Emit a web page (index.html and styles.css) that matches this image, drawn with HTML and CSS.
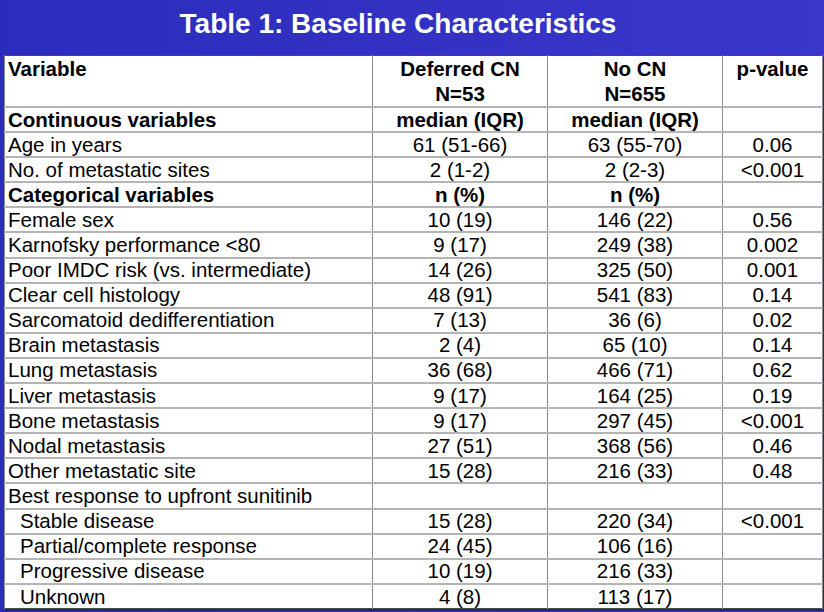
FILE: index.html
```html
<!DOCTYPE html>
<html lang="en">
<head>
    <meta charset="UTF-8">
    <meta name="viewport" content="width=device-width, initial-scale=1.0">
    <title>Table 1: Baseline Characteristics</title>
    <link rel="stylesheet" href="styles.css">
</head>
<body>

    <h1>Table 1: Baseline Characteristics</h1>

    <table class="baseline">
        <colgroup>
            <col class="col-var">
            <col class="col-num">
            <col class="col-num">
            <col class="col-p">
        </colgroup>
        <tr class="head">
            <th class="label">Variable</th>
            <th>Deferred CN<br>N=53</th>
            <th>No CN<br>N=655</th>
            <th>p-value</th>
        </tr>
        <tr class="section">
            <th class="label">Continuous variables</th>
            <th>median (IQR)</th>
            <th>median (IQR)</th>
            <th></th>
        </tr>
        <tr><td class="label">Age in years</td><td>61 (51-66)</td><td>63 (55-70)</td><td>0.06</td></tr>
        <tr><td class="label">No. of metastatic sites</td><td>2 (1-2)</td><td>2 (2-3)</td><td>&lt;0.001</td></tr>
        <tr class="section">
            <th class="label">Categorical variables</th>
            <th>n (%)</th>
            <th>n (%)</th>
            <th></th>
        </tr>
        <tr><td class="label">Female sex</td><td>10 (19)</td><td>146 (22)</td><td>0.56</td></tr>
        <tr><td class="label">Karnofsky performance &lt;80</td><td>9 (17)</td><td>249 (38)</td><td>0.002</td></tr>
        <tr><td class="label">Poor IMDC risk (vs. intermediate)</td><td>14 (26)</td><td>325 (50)</td><td>0.001</td></tr>
        <tr><td class="label">Clear cell histology</td><td>48 (91)</td><td>541 (83)</td><td>0.14</td></tr>
        <tr><td class="label">Sarcomatoid dedifferentiation</td><td>7 (13)</td><td>36 (6)</td><td>0.02</td></tr>
        <tr><td class="label">Brain metastasis</td><td>2 (4)</td><td>65 (10)</td><td>0.14</td></tr>
        <tr><td class="label">Lung metastasis</td><td>36 (68)</td><td>466 (71)</td><td>0.62</td></tr>
        <tr><td class="label">Liver metastasis</td><td>9 (17)</td><td>164 (25)</td><td>0.19</td></tr>
        <tr><td class="label">Bone metastasis</td><td>9 (17)</td><td>297 (45)</td><td>&lt;0.001</td></tr>
        <tr><td class="label">Nodal metastasis</td><td>27 (51)</td><td>368 (56)</td><td>0.46</td></tr>
        <tr><td class="label">Other metastatic site</td><td>15 (28)</td><td>216 (33)</td><td>0.48</td></tr>
        <tr><td class="label">Best response to upfront sunitinib</td><td></td><td></td><td></td></tr>
        <tr><td class="label sub">Stable disease</td><td>15 (28)</td><td>220 (34)</td><td>&lt;0.001</td></tr>
        <tr><td class="label sub">Partial/complete response</td><td>24 (45)</td><td>106 (16)</td><td></td></tr>
        <tr><td class="label sub">Progressive disease</td><td>10 (19)</td><td>216 (33)</td><td></td></tr>
        <tr><td class="label sub">Unknown</td><td>4 (8)</td><td>113 (17)</td><td></td></tr>
    </table>

</body>
</html>
```

FILE: styles.css
```css
body {
    font-family: "Liberation Sans", Arial, sans-serif;
    margin: 0;
    height: 612px;
    overflow: hidden;
    background: linear-gradient(to right, #2b2cbc, #3a37c9);
}
h1 {
    margin: 0;
    padding: 0 28px 7px 0;
    line-height: 48px;
    font-size: 28px;
    font-weight: bold;
    color: #fff;
    text-align: center;
}
.baseline {
    border-collapse: collapse;
    table-layout: fixed;
    width: 818px;
    margin-left: 4px;
    background-color: #fff;
    border: 1px solid #4a4a4a;
    box-shadow: 1px 2px 0 #262680;
    font-size: 20.5px;
    color: #000;
}
.col-var { width: 368px; }
.col-num { width: 175px; }
.col-p { width: 100px; }
.baseline tr {
    height: 25.1px;
}
.baseline td,
.baseline th {
    padding: 0 3px;
    line-height: 22px;
    text-align: center;
    vertical-align: middle;
    white-space: nowrap;
    border-left: 1px solid #8c8c8c;
    border-right: 1px solid #8c8c8c;
    border-top: 2px solid #b4b4b4;
    border-bottom: 2px solid #b4b4b4;
}
.baseline th {
    font-weight: bold;
}
.baseline .label {
    text-align: left;
}
.baseline .sub {
    padding-left: 15px;
}
/* ligne d'en-tête sur deux lignes */
.baseline tr.head {
    height: 51px;
}
.baseline tr.head th {
    vertical-align: top;
    line-height: 25px;
    padding-top: 0;
    border-top: none;
}
.baseline tr:last-child td {
    border-bottom: none;
}
```
